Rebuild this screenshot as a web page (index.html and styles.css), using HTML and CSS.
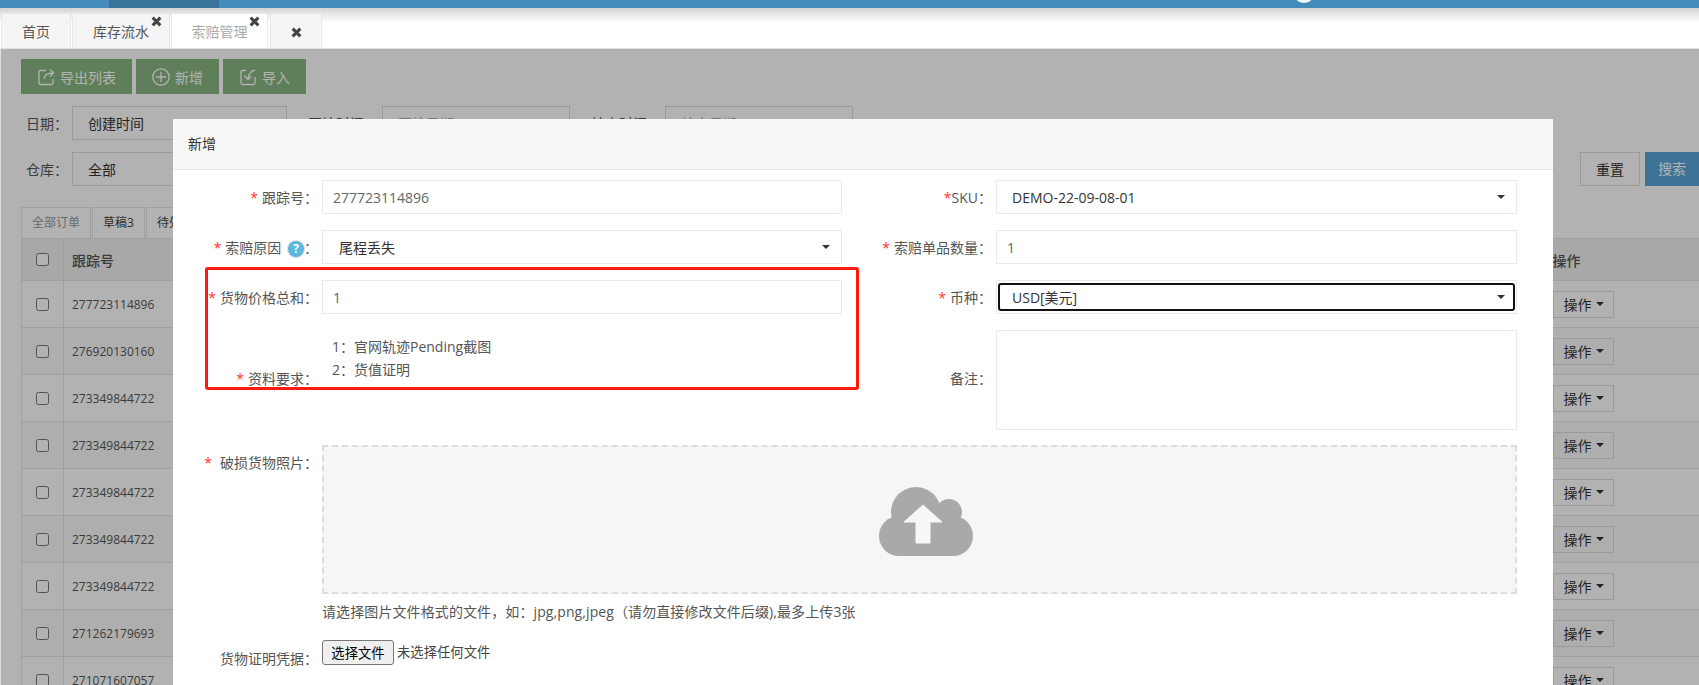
FILE: index.html
```html
<!DOCTYPE html>
<html lang="en">
<head>
    <meta charset="UTF-8">
    <title>索赔管理</title>
    <link rel="stylesheet" href="styles.css">
</head>
<body>

    <!-- Top bar -->
    <div class="topbar">
        <div class="topbar-active"></div>
        <div class="topbar-avatar"></div>
    </div>

    <!-- Page tabs -->
    <div class="tabbar">
        <div class="page-tab tab-home">首页</div>
        <div class="page-tab tab-stock">库存流水<svg class="tab-close" viewBox="0 0 10 10"><path d="M1.5 1.5l7 7M8.5 1.5l-7 7"/></svg></div>
        <div class="page-tab tab-claim active">索赔管理<svg class="tab-close" viewBox="0 0 10 10"><path d="M1.5 1.5l7 7M8.5 1.5l-7 7"/></svg></div>
        <div class="page-tab tab-empty"><svg class="tab-x" viewBox="0 0 10 10"><path d="M1.5 1.5l7 7M8.5 1.5l-7 7"/></svg></div>
    </div>

    <div class="content">
        <div class="toolbar">
            <div class="btn-green">
                <svg class="btn-icon" viewBox="0 0 18 18"><path d="M9 2.500H3.500A1.500 1.500 0 0 0 2 4v11A1.500 1.500 0 0 0 3.500 16.500h11a1.500 1.500 0 0 0 1.500-1.500V11"/><path d="M7 11c.5-4 3-6 9-6M13 1.500l3.500 3.500-3.500 3.500"/></svg>
                导出列表
            </div>
            <div class="btn-green">
                <svg class="btn-icon" viewBox="0 0 18 18"><circle cx="9" cy="9" r="8.200"/><path d="M9 4v10M4 9h10"/></svg>
                新增
            </div>
            <div class="btn-green">
                <svg class="btn-icon" viewBox="0 0 18 18"><path d="M7 2.500H3.500A1.500 1.500 0 0 0 2 4v11A1.500 1.500 0 0 0 3.500 16.500h11a1.500 1.500 0 0 0 1.500-1.500V9"/><path d="M16 2c-4 1-6.500 3.500-7 9M5.500 7.500l3.500 4 3.500-3"/></svg>
                导入
            </div>
        </div>

        <div class="filter-row">
            <span class="filter-label">日期：</span>
            <div class="filter-box filter-select">创建时间</div>
            <span class="filter-label filter-label-time">开始时间：</span>
            <div class="filter-box filter-date">开始日期</div>
            <span class="filter-label filter-label-time">结束时间：</span>
            <div class="filter-box filter-date">结束日期</div>
        </div>

        <div class="filter-row">
            <span class="filter-label">仓库：</span>
            <div class="filter-box filter-select">全部</div>
            <div class="filter-actions">
                <div class="btn-reset">重置</div>
                <div class="btn-search">搜索</div>
            </div>
        </div>

        <div class="order-tabs">
            <div class="order-tab current">全部订单</div>
            <div class="order-tab">草稿3</div>
            <div class="order-tab">待处理</div>
        </div>

        <table class="order-table">
            <thead>
                <tr>
                    <th class="col-check"><input type="checkbox"></th>
                    <th class="col-track">跟踪号</th>
                    <th class="col-action">操作</th>
                </tr>
            </thead>
            <tbody>
                <tr><td><input type="checkbox"></td><td class="cell-track">277723114896</td><td><div class="btn-action">操作<i class="caret"></i></div></td></tr>
                <tr><td><input type="checkbox"></td><td class="cell-track">276920130160</td><td><div class="btn-action">操作<i class="caret"></i></div></td></tr>
                <tr><td><input type="checkbox"></td><td class="cell-track">273349844722</td><td><div class="btn-action">操作<i class="caret"></i></div></td></tr>
                <tr><td><input type="checkbox"></td><td class="cell-track">273349844722</td><td><div class="btn-action">操作<i class="caret"></i></div></td></tr>
                <tr><td><input type="checkbox"></td><td class="cell-track">273349844722</td><td><div class="btn-action">操作<i class="caret"></i></div></td></tr>
                <tr><td><input type="checkbox"></td><td class="cell-track">273349844722</td><td><div class="btn-action">操作<i class="caret"></i></div></td></tr>
                <tr><td><input type="checkbox"></td><td class="cell-track">273349844722</td><td><div class="btn-action">操作<i class="caret"></i></div></td></tr>
                <tr><td><input type="checkbox"></td><td class="cell-track">271262179693</td><td><div class="btn-action">操作<i class="caret"></i></div></td></tr>
                <tr><td><input type="checkbox"></td><td class="cell-track">271071607057</td><td><div class="btn-action">操作<i class="caret"></i></div></td></tr>
            </tbody>
        </table>

        <div class="backdrop"></div>
    </div>

    <!-- Add dialog -->
    <div class="modal">
        <div class="modal-header">新增</div>
        <div class="modal-body">
            <div class="form-grid">
                <div class="field">
                    <label class="field-label"><span class="star">*</span>跟踪号：</label>
                    <div class="control">277723114896</div>
                </div>
                <div class="field field-right">
                    <label class="field-label"><span class="star star-tight">*</span>SKU：</label>
                    <div class="control control-select">DEMO-22-09-08-01<i class="caret"></i></div>
                </div>

                <div class="field">
                    <label class="field-label"><span class="star">*</span>索赔原因 <span class="help">?</span>：</label>
                    <div class="control control-select">尾程丢失<i class="caret"></i></div>
                </div>
                <div class="field field-right">
                    <label class="field-label"><span class="star">*</span>索赔单品数量：</label>
                    <div class="control">1</div>
                </div>

                <div class="field">
                    <label class="field-label"><span class="star">*</span>货物价格总和：</label>
                    <div class="control">1</div>
                </div>
                <div class="field field-right">
                    <label class="field-label"><span class="star">*</span>币种：</label>
                    <div class="control control-select control-focus">USD[美元]<i class="caret"></i></div>
                </div>

                <div class="field field-tall">
                    <label class="field-label"><span class="star">*</span>资料要求：</label>
                    <div class="doc-list">
                        <div>1：官网轨迹Pending截图</div>
                        <div>2：货值证明</div>
                    </div>
                </div>
                <div class="field field-right field-tall">
                    <label class="field-label">备注：</label>
                    <div class="control control-area"></div>
                </div>
            </div>

            <div class="field field-upload">
                <label class="field-label"><span class="star star-wide">*</span>破损货物照片：</label>
                <div class="upload-col">
                    <div class="upload-zone">
                        <svg class="upload-icon" viewBox="0 0 94 69">
                            <g class="cloud">
                                <circle cx="37" cy="25" r="25"/>
                                <circle cx="70" cy="25" r="13"/>
                                <circle cx="20" cy="49" r="20"/>
                                <circle cx="74" cy="49" r="20"/>
                                <rect x="20" y="29" width="54" height="40"/>
                            </g>
                            <path class="arrow" d="M44 18L25 35h12v21h14V35h12z"/>
                        </svg>
                    </div>
                    <div class="upload-hint">请选择图片文件格式的文件，如：jpg,png,jpeg（请勿直接修改文件后缀),最多上传3张</div>
                </div>
            </div>

            <div class="field field-file">
                <label class="field-label">货物证明凭据：</label>
                <button class="file-btn">选择文件</button>
                <span class="file-name">未选择任何文件</span>
            </div>

            <div class="annotation"></div>
        </div>
    </div>

</body>
</html>
```

FILE: styles.css
```css
* {
    box-sizing: border-box;
}
html, body {
    height: 685px;
    overflow: hidden;
}
body {
    margin: 0;
    position: relative;
    font-family: "Open Sans", "Noto Sans CJK SC", sans-serif;
    font-size: 14px;
    color: #555;
    background-color: #fff;
}
/* Top bar */
.topbar {
    display: flex;
    height: 8px;
    overflow: hidden;
    background-color: #428bba;
}
.topbar-active {
    width: 110px;
    margin-left: 109px;
    background-color: #37739a;
}
.topbar-avatar {
    width: 22px;
    height: 22px;
    margin: -19px 0 0 1074px;
    border-radius: 50%;
    background-color: #fff;
}
/* Page tabs */
.tabbar {
    display: flex;
    gap: 1px;
    height: 41px;
    padding: 5px 0 0 1px;
    background: linear-gradient(#d4d4d4, #fff 14px);
    border-bottom: 1px solid #dfe1ea;
}
.page-tab {
    position: relative;
    height: 35px;
    line-height: 36px;
    text-align: center;
    background-color: #f5f5f5;
    border: 1px solid #e8e9ef;
    border-bottom: none;
}
.page-tab.active {
    background-color: #fff;
    color: #aaa;
}
.tab-home { width: 70px; }
.tab-stock { width: 98px; }
.tab-claim { width: 97px; }
.tab-empty { width: 52px; margin-left: 1px; }
.tab-close {
    position: absolute;
    top: 2px;
    right: 7px;
    width: 11px;
    height: 11px;
}
.tab-x {
    display: block;
    width: 11px;
    height: 11px;
    margin: 13px auto 0;
}
.tab-close path, .tab-x path {
    fill: none;
    stroke: #444;
    stroke-width: 2.8;
}
/* Page behind the dialog */
.content {
    position: relative;
    height: 636px;
    padding: 10px 0 0 20px;
    overflow: hidden;
    border-left: 1px solid #ddd;
}
.backdrop {
    position: absolute;
    top: 0;
    left: 0;
    right: 0;
    bottom: 0;
    background-color: rgba(0, 0, 0, 0.3);
}
.toolbar {
    display: flex;
    gap: 4px;
}
.btn-green {
    display: flex;
    align-items: center;
    gap: 5px;
    height: 35px;
    padding: 0 16px;
    background-color: #89b781;
    color: #fff;
}
.btn-icon {
    width: 18px;
    height: 18px;
    fill: none;
    stroke: #fff;
    stroke-width: 1.300;
}
.filter-row {
    display: flex;
    align-items: center;
    height: 34px;
    margin-top: 12px;
    padding-left: 5px;
}
.filter-label {
    width: 46px;
    color: #555;
}
.filter-label-time {
    width: 74px;
    margin-left: 21px;
}
.filter-box {
    height: 34px;
    line-height: 34px;
    padding-left: 15px;
    border: 1px solid #ddd;
}
.filter-select {
    width: 215px;
    color: #333;
}
.filter-date {
    width: 188px;
    color: #aaa;
}
.filter-actions {
    display: flex;
    gap: 5px;
    margin-left: auto;
}
.btn-reset, .btn-search {
    height: 34px;
    line-height: 34px;
    text-align: center;
}
.btn-reset {
    width: 60px;
    color: #333;
    border: 1px solid #ddd;
}
.btn-search {
    width: 54px;
    color: #fff;
    background-color: #58a5d8;
}
.order-tabs {
    display: flex;
    gap: 1px;
    height: 31px;
    margin-top: 21px;
}
.order-tab {
    height: 31px;
    line-height: 30px;
    text-align: center;
    white-space: nowrap;
    font-size: 12px;
    border: 1px solid #e5e5e5;
    border-bottom: none;
}
.order-tab.current {
    width: 70px;
    color: #999;
}
.order-tab + .order-tab {
    width: 53px;
    color: #444;
}
.order-tab + .order-tab + .order-tab {
    width: 80px;
    padding-left: 10px;
    text-align: left;
}
.order-table {
    width: 1678px;
    table-layout: fixed;
    border-collapse: collapse;
    border: 1px solid #e5e5e5;
    border-right: none;
}
.order-table th {
    height: 42px;
    text-align: left;
    font-weight: 500;
    background-color: #f1f1f1;
    border: 1px solid #e5e5e5;
    border-width: 0 0 1px 1px;
    padding: 0 8px;
}
.order-table td {
    height: 47px;
    padding: 0 8px;
    font-size: 12px;
    border-bottom: 1px solid #e5e5e5;
    border-left: 1px solid #e5e5e5;
}
.order-table tbody tr:nth-child(even) td {
    background-color: #fafafa;
}
.order-table input {
    display: block;
    width: 13px;
    height: 13px;
    margin: 0 0 0 6px;
}
.col-check { width: 42px; }
.col-action { width: 155px; }
.btn-action {
    display: inline-flex;
    align-items: center;
    gap: 4px;
    height: 27px;
    padding: 0 9px 0 10px;
    font-size: 14px;
    color: #333;
    border: 1px solid #ddd;
}
.caret {
    display: inline-block;
    width: 0;
    height: 0;
    border-top: 4px solid #333;
    border-left: 4px solid transparent;
    border-right: 4px solid transparent;
}
/* Dialog */
.modal {
    position: absolute;
    top: 119px;
    left: 173px;
    width: 1380px;
    height: 566px;
    background-color: #fff;
}
.modal-header {
    height: 51px;
    line-height: 50px;
    padding-left: 15px;
    color: #333;
    background-color: #f7f7f7;
    border-bottom: 1px solid #e7e8ee;
}
.modal-body {
    position: relative;
    padding-top: 10px;
}
.form-grid {
    display: grid;
    grid-template-columns: 669px 675px;
    row-gap: 16px;
}
.field {
    display: flex;
}
.field-label {
    flex: none;
    width: 149px;
    height: 34px;
    line-height: 36px;
    padding-right: 4px;
    text-align: right;
    white-space: nowrap;
}
.field-right .field-label {
    width: 154px;
}
.star {
    margin-right: 4px;
    color: #f33;
}
.star-tight {
    margin-right: 0;
}
.star-wide {
    margin-right: 8px;
}
.help {
    display: inline-block;
    width: 16px;
    height: 16px;
    margin-left: 3px;
    line-height: 16px;
    border-radius: 50%;
    text-align: center;
    font-size: 12px;
    font-weight: bold;
    color: #fff;
    background-color: #5bb7dc;
    box-shadow: 0 0 0 1px #ddd;
}
.control {
    position: relative;
    flex: 1;
    height: 34px;
    line-height: 33px;
    padding-left: 10px;
    color: #666;
    border: 1px solid #e9eaf1;
    background-color: #fff;
}
.control-select {
    padding-left: 16px;
    color: #333;
}
.field-right .control-select {
    padding-left: 15px;
}
.control-select .caret {
    position: absolute;
    top: 14px;
    right: 11px;
}
.control-focus::before {
    content: "";
    position: absolute;
    top: 2px;
    left: 1px;
    right: 1px;
    bottom: 2px;
    border: 2px solid #111;
    border-radius: 3px;
}
.field-tall {
    height: 100px;
}
.field-tall .field-label {
    align-self: center;
    line-height: 32px;
}
.control-area {
    height: 100px;
}
.doc-list {
    padding: 5px 0 0 10px;
    line-height: 23px;
}
.field-upload {
    margin-top: 15px;
}
.field-upload .field-label {
    height: auto;
    line-height: 20px;
    padding-top: 8px;
}
.upload-col {
    width: 1195px;
}
.upload-zone {
    display: flex;
    align-items: center;
    justify-content: center;
    height: 149px;
    padding: 4px 0 0 13px;
    background-color: #f6f6f6;
    border: 2px dashed #ddd;
}
.upload-icon {
    width: 94px;
    height: 69px;
}
.cloud {
    fill: #a9a9a9;
}
.arrow {
    fill: #f7f7f7;
    stroke: #f7f7f7;
    stroke-width: 1;
    stroke-linejoin: round;
}
.upload-hint {
    margin-top: 8px;
    line-height: 20px;
    letter-spacing: 0.1px;
}
.field-file {
    align-items: flex-start;
    margin-top: 18px;
}
.field-file .field-label {
    margin-top: 1px;
}
.file-btn {
    width: 72px;
    height: 25px;
    padding: 0;
    font-family: inherit;
    font-size: 13.33px;
    color: #000;
    background-color: #efefef;
    border: 1px solid #767676;
    border-radius: 3px;
}
.file-name {
    margin-left: 3px;
    font-size: 13.33px;
    line-height: 24px;
    color: #444;
}
/* Red mark on the screenshot */
.annotation {
    position: absolute;
    top: 97px;
    left: 32px;
    width: 654px;
    height: 123px;
    border: 3px solid #ff1a0e;
    border-radius: 3px;
    pointer-events: none;
}
```
